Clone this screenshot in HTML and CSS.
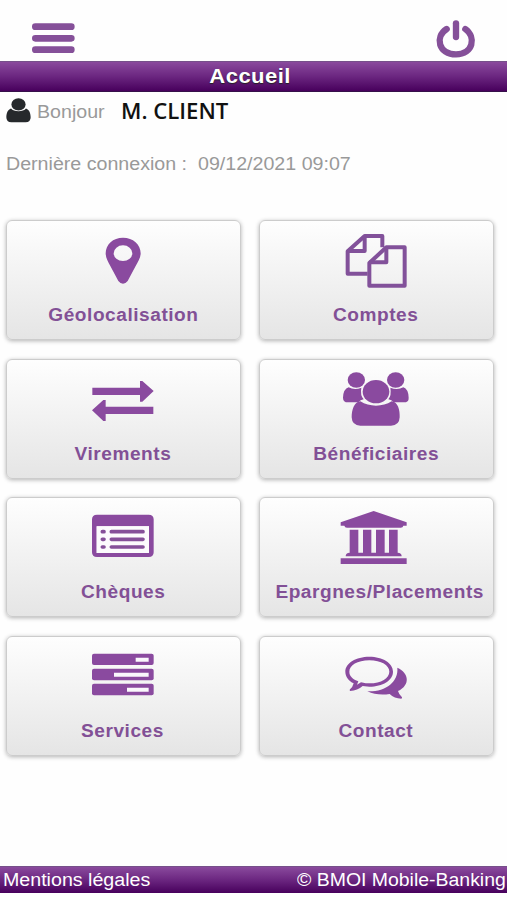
FILE: index.html
```html
<!DOCTYPE html>
<html lang="fr">
<head>
<meta charset="utf-8">
<title>Accueil</title>
<link rel="stylesheet" href="styles.css">
</head>
<body>
<header class="top">
  <svg class="menu" viewBox="0 0 132 93"><path d="M13 11H121M13 46H121M13 80H121" stroke="#855099" stroke-width="20" stroke-linecap="round"/></svg>
  <svg class="power" viewBox="0 0 126 120" fill="none" stroke="#855099" stroke-linecap="round"><path d="M35 27C-2 51 11 103 63 103S124 51 91 27" stroke-width="19"/><path d="M63 10V51" stroke-width="19"/></svg>
</header>
<h1 class="bar title"><span>Accueil</span></h1>
<section class="hello">
  <svg class="user" viewBox="0 0 74 72" fill="#26292c"><ellipse cx="37" cy="18" rx="21" ry="18"/><path d="M15 30C22 41 52 41 59 30C68 33 73 43 73 56Q73 71 58 71H16Q1 71 1 56C1 43 6 33 15 30Z"/></svg>
  <span class="greet">Bonjour</span><strong class="client">M. CLIENT</strong>
</section>
<p class="last"><span class="lastlabel">Dernière connexion :</span><span class="date">09/12/2021 09:07</span></p>
<main class="grid">
  <a class="card"><svg viewBox="253 57 240 198"><path fill-rule="evenodd" d="M370 83C340 83 318 103 318 130C318 145 326 156 332 168L356 213Q362 221 370 221T384 213L408 168C414 156 423 145 423 130C423 103 400 83 370 83ZM370 106A28 23.500 0 1 1 370 153A28 23.500 0 1 1 370 106Z"/></svg><span>Géolocalisation</span></a>
  <a class="card"><svg viewBox="253 57 240 198"><g fill="none" stroke="#82519a" stroke-width="12" stroke-linejoin="round"><path d="M345 191H285V124L336 78H389V112"/><path d="M336 78V123H285"/><path d="M350 159L401 112H456V227H350Z"/><path d="M401 112V157H350"/></g></svg><span>Comptes</span></a>
  <a class="card"><svg viewBox="253 53 240 198"><path d="M278 112H421V92H428L462 122L428 154H421V134H278ZM461 169H318V149H311L277 180L311 212H318V191H461Z"/></svg><span>Virements</span></a>
  <a class="card"><svg viewBox="253 53 240 198"><ellipse cx="311" cy="89" rx="26" ry="23"/><ellipse cx="429" cy="89" rx="26" ry="23"/><path d="M288 111Q306 121 326 112Q322 135 333 147Q323 149 317 156H286Q271 156 271 142Q272 116 288 111ZM452 111Q434 121 413 112Q417 135 407 147Q417 149 423 156H453Q469 156 468 142Q467 116 452 111Z"/><ellipse cx="370" cy="124" rx="40" ry="35"/><path d="M323 153Q344 166 370 166T417 153C436 155 442 179 441 201Q440 226 415 226H323Q298 226 297 201C297 179 304 155 323 153Z"/></svg><span>Bénéficiaires</span></a>
  <a class="card"><svg viewBox="253 48 240 198"><path fill-rule="evenodd" d="M292 74H447Q462 74 462 88V187Q462 201 447 201H292Q277 201 277 187V88Q277 74 292 74ZM291 109V189H448V109Z"/><path fill="#fcfbfd" d="M291 109H448V189H291Z"/><g stroke="#855099" stroke-width="11" stroke-linecap="round"><path d="M308 125H313M335 125H430M308 148H313M335 148H430M308 171H313M335 171H430"/></g></svg><span>Chèques</span></a>
  <a class="card"><svg viewBox="253 48 240 198"><path d="M363 63L462 97V107H452Q451 113 444 113H283Q276 113 275 107H264V97ZM291 119H317V188H331V119H356V188H370V119H396V188H409V119H435V188Q447 188 447 199H279Q279 188 291 188ZM264 205H462V222H264Z"/></svg><span class="wide">Epargnes/Placements</span></a>
  <a class="card"><svg viewBox="253 43 240 198"><rect x="277" y="69" width="185" height="34" rx="6"/><rect x="277" y="114" width="185" height="35" rx="6"/><rect x="277" y="159" width="185" height="35" rx="6"/><path fill="#faf7fc" d="M408 81H447V93H408ZM343 126H447V138H343ZM382 171H447V183H382Z"/></svg><span>Services</span></a>
  <a class="card"><svg viewBox="253 45 240 198"><path fill-rule="evenodd" d="M350 80C390 80 421 99 421 125C421 151 390 170 350 170L330 168Q315 181 292 183Q290 180 292 178Q300 172 303 160C288 153 278 140 278 125C278 99 310 80 350 80ZM350 91C314 91 290 106 290 125C290 139 301 148 317 154L313 164L325 157C335 160 344 160 350 160C386 160 410 144 410 125C410 106 386 91 350 91Z"/><path d="M434 113C469 128 474 165 436 183Q439 194 448 202Q449 205 446 206Q425 206 411 192C386 196 364 193 344 184C399 186 438 155 434 113Z"/></svg><span>Contact</span></a>
</main>
<footer class="bar foot"><span class="legal">Mentions légales</span><span class="brand">© BMOI Mobile-Banking</span></footer>
</body>
</html>
```
FILE: styles.css
```css
* { box-sizing: border-box; }
body {
  margin: 0;
  height: 900px;
  overflow: hidden;
  display: flex;
  flex-direction: column;
  background: #fefefe;
  font-family: "Liberation Sans", Arial, sans-serif;
}
svg { display: block; flex: none; }
.top {
  height: 61px;
  padding: 20px 30px 0 31px;
  display: flex;
  justify-content: space-between;
}
.menu { width: 44px; height: 31px; margin-top: 3px; }
.power { width: 42px; height: 40px; }
.bar {
  flex: none;
  display: flex;
  align-items: center;
  background: linear-gradient(#8a4a9d, #6b2680 50%, #47005c);
  color: #fff;
}
.title {
  height: 31px;
  margin: 0;
  justify-content: center;
  border-top: 1px solid #76508a;
  border-bottom: 1px solid #36104a;
  font-size: 19.500px;
  text-shadow: 0 1px 1px #222;
}
.title span { transform: scaleX(1.13); letter-spacing: .4px; margin-left: -7px; }
.hello { height: 38px; padding: 6px 0 0 6px; display: flex; }
.user { width: 25px; height: 25px; }
.greet, .client, .lastlabel, .date, .legal, .brand { white-space: nowrap; transform-origin: left center; }
.greet {
  width: 86px;
  padding-left: 6px;
  line-height: 28px;
  font-size: 18px;
  color: #999;
  transform: scaleX(1.09);
  transform-origin: 6px center;
}
.client {
  margin-left: 4px;
  font: 600 21px/26px "Open Sans", sans-serif;
  color: #111;
  transform: scaleX(1.055);
}
.last { height: 67px; margin: 24px 0 -1px; padding-left: 6px; display: flex; font-size: 18px; line-height: 21px; color: #999; }
.lastlabel { width: 192px; transform: scaleX(1.09); }
.date { transform: scaleX(1.09); }
.grid {
  margin-left: 6px;
  display: grid;
  grid-template-columns: 235px 235px;
  grid-auto-rows: 120px;
  gap: 18.500px 18px;
}
.card {
  padding-top: 8px;
  display: flex;
  flex-direction: column;
  align-items: center;
  border: 1px solid #ccc;
  border-radius: 6px;
  background: linear-gradient(#fefefe, #e5e5e5);
  box-shadow: 0 1px 4px rgba(0, 0, 0, .3);
  color: #825096;
  font-weight: bold;
  font-size: 17.500px;
}
.card svg { width: 80px; height: 66px; fill: #8a4a9f; }
.card span { margin-top: 9px; line-height: 22px; letter-spacing: .5px; transform: translateX(-.5px) scaleX(1.09); white-space: nowrap; }
.card .wide { transform: translateX(3px) scaleX(1.09); }
.foot {
  height: 27px;
  margin: auto 0 7px;
  padding: 0 0 0 3px;
  border-top: 1px solid #76508a;
  font-size: 18px;
}
.legal { width: 294px; transform: scaleX(1.09); }
.brand { transform: scaleX(1.08); }
```
